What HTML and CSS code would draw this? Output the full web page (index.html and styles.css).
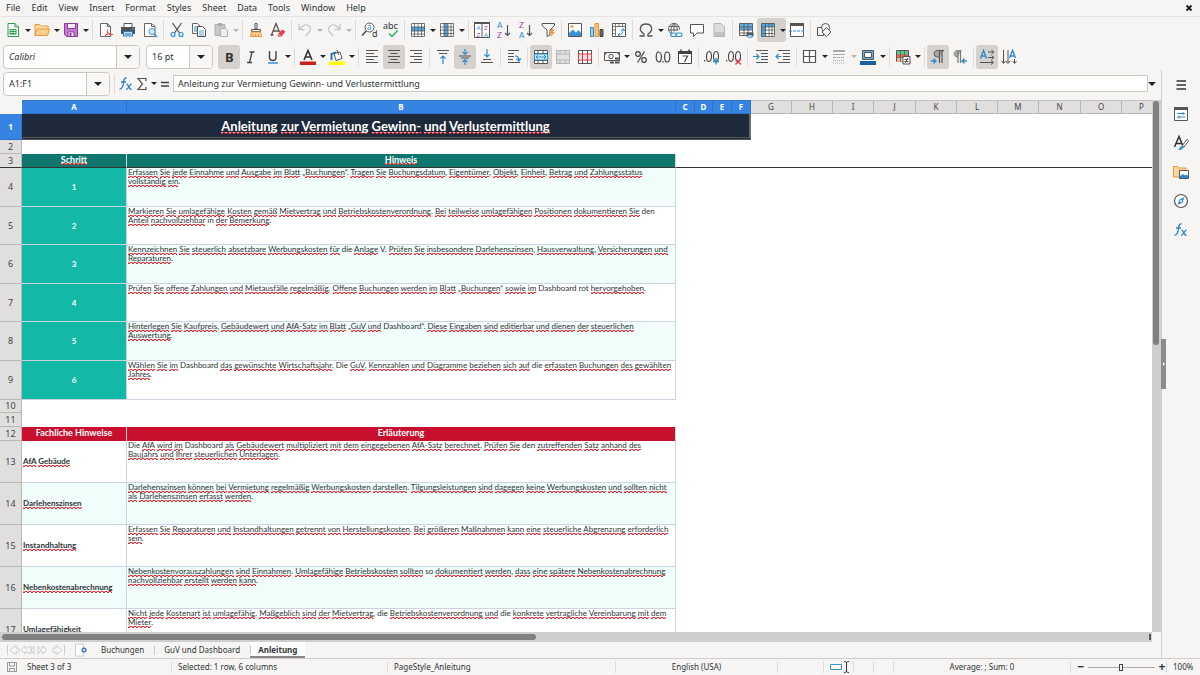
FILE: index.html
```html
<!DOCTYPE html>
<html lang="de">
<head>
<meta charset="utf-8">
<title>Anleitung – Tabelle</title>
<link rel="stylesheet" href="styles.css">
</head>
<body>
<header class="menubar">
  <nav class="menus">
    <button>File</button><button>Edit</button><button>View</button><button>Insert</button><button>Format</button><button>Styles</button><button>Sheet</button><button>Data</button><button>Tools</button><button>Window</button><button>Help</button>
  </nav>
  <button class="close" aria-label="Close"><svg class="i8" viewBox="0 0 8 8"><path d="M1.500 1.500L6.500 6.500M6.500 1.500L1.500 6.500" stroke="#222" stroke-width="2"/></svg></button>
</header>

<div class="toolbar" role="toolbar" aria-label="Standard">
  <button class="tb" aria-label="New"><svg viewBox="0 0 16 16"><path d="M3 1.500h7l3.500 3.500v9.500H3z" fill="#fff" stroke="#2e9e4f"/><path d="M10 1.500V5h3.500" fill="#bfe5c8" stroke="#2e9e4f"/><path d="M4.500 7h7v5.500h-7z" fill="#2e9e4f"/><path d="M5.500 8.500h2m1 0h2M5.500 10.500h2m1 0h2" stroke="#fff"/></svg></button><button class="arr" aria-label="More"></button>
  <button class="tb" aria-label="Open"><svg viewBox="0 0 16 16"><path d="M1 13V2.500h4.500l1 1.500H14v3" fill="#fce0a8" stroke="#e8963a"/><path d="M1 13.500L3 7h12.500l-2 6.500z" fill="#fbd18d" stroke="#e8963a"/></svg></button><button class="arr" aria-label="More"></button>
  <button class="tb" aria-label="Save"><svg viewBox="0 0 16 16"><path d="M1.500 1.500h13v13h-11l-2-2z" fill="#c679cf" stroke="#8e3a9d"/><path d="M4.500 1.500h8v5h-8z" fill="#f6eaf7" stroke="#8e3a9d"/><path d="M5 10h6v4.500H5z" fill="#fff" stroke="#8e3a9d"/><path d="M6.500 11h2v3h-2z" fill="#8e3a9d"/></svg></button><button class="arr" aria-label="More"></button>
  <span class="sep"></span>
  <button class="tb" aria-label="Export as PDF"><svg viewBox="0 0 16 16"><path d="M2.500 1.500h7l3 3v10h-10z" fill="#fff" stroke="#666"/><path d="M9.500 1.500v3h3" fill="none" stroke="#666"/><path d="M6.500 14.500c2-1 3.500-4 3.200-7M9.500 10c1.500 2.500 3.500 3 5.500 2.500M7 13.500c2-1.500 5-2 7.500-1" fill="none" stroke="#df3b45"/></svg></button>
  <button class="tb" aria-label="Print"><svg viewBox="0 0 16 16"><path d="M4 5V1.500h8V5" fill="#fff" stroke="#555"/><path d="M1 5h14v7H1z" fill="#4d5359"/><path d="M3.500 9.500h9v4.500h-9z" fill="#bcdcf2" stroke="#2878b8"/><path d="M5 12h6" stroke="#2878b8"/><circle cx="13" cy="7" r=".8" fill="#6bb6ec"/></svg></button>
  <button class="tb" aria-label="Print Preview"><svg viewBox="0 0 16 16"><path d="M2.500 1.500h7l3.500 3v10H2.500z" fill="#fff" stroke="#666"/><path d="M9.500 1.500v3h3.500" fill="none" stroke="#666"/><circle cx="10" cy="9.500" r="3" fill="#d8edfa" stroke="#3a94d3"/><path d="M12.200 12l2.800 3" stroke="#3a94d3" stroke-width="1.500"/></svg></button>
  <span class="sep"></span>
  <button class="tb" aria-label="Cut"><svg viewBox="0 0 16 16" fill="none"><path d="M3.500 1l7 10M12.500 1l-7 10" stroke="#555" stroke-width="1.300"/><circle cx="4" cy="12.500" r="2" stroke="#2d8ccf" stroke-width="1.200"/><circle cx="12" cy="12.500" r="2" stroke="#2d8ccf" stroke-width="1.200"/></svg></button>
  <button class="tb" aria-label="Copy"><svg viewBox="0 0 16 16"><path d="M1.500 1.500h5l3 3v7h-8z" fill="#fff" stroke="#666"/><path d="M3 5h4M3 7h4M3 9h4" stroke="#2d8ccf"/><path d="M6.500 4.500h5l3 3v7h-8z" fill="#fff" stroke="#555"/><path d="M8 9h5M8 11h5M8 13h5" stroke="#2d8ccf" stroke-width=".8"/></svg></button>
  <button class="tb" aria-label="Paste"><svg viewBox="0 0 16 16"><path d="M2 2.500h10v11H2z" fill="#c9c8c6" stroke="#b0afad"/><path d="M5 1h4v3H5z" fill="#aaa9a7"/><path d="M7.500 6.500h5l2 2v6h-7z" fill="#eee" stroke="#b0afad"/></svg></button><button class="arr dim" aria-label="More"></button>
  <span class="sep"></span>
  <button class="tb" aria-label="Clone Formatting"><svg viewBox="0 0 16 16"><path d="M7 1.500h2V7H7z" fill="#fff" stroke="#555"/><path d="M3.500 7.500h9v2h-9z" fill="#eee" stroke="#555"/><path d="M3.500 10h9l1 4.500h-11z" fill="#fbd7a3" stroke="#e8963a"/><path d="M5 12v2m2.500-2v2m3-2v2" stroke="#e8963a"/></svg></button>
  <button class="tb" aria-label="Clear Formatting"><svg viewBox="0 0 16 16"><path d="M1.500 13L6 1.500 9.500 10M3 9h6M.500 13h3" fill="none" stroke="#555" stroke-width="1.300"/><path d="M7.500 12.500l4.500-5 3.500 2-4.500 5.500-3-.5z" fill="#e4434b"/><path d="M8 12l3 2.500" stroke="#fbc7ca"/></svg></button>
  <span class="sep"></span>
  <button class="tb" aria-label="Undo"><svg viewBox="0 0 16 16" fill="none" stroke="#c6c5c3" stroke-width="1.300"><path d="M2 2v5.500h5.500M2 7.500C5 3 10 1.500 12.500 4.500S13 10 8.500 14"/></svg></button><button class="arr dim" aria-label="More"></button>
  <button class="tb" aria-label="Redo"><svg viewBox="0 0 16 16" fill="none" stroke="#c6c5c3" stroke-width="1.300"><path d="M14 2v5.500H8.500M14 7.500C11 3 6 1.500 3.500 4.500S3 10 7.500 14"/></svg></button><button class="arr dim" aria-label="More"></button>
  <span class="sep"></span>
  <button class="tb" aria-label="Find and Replace"><svg viewBox="0 0 16 16"><circle cx="8.500" cy="5.500" r="4.500" fill="#fff" stroke="#555"/><path d="M5.200 9L1 13.500" stroke="#555" stroke-width="1.800"/><text x="6" y="8" font-size="8" fill="#2d8ccf">a</text><text x="11" y="15" font-size="9" fill="#333">d</text></svg></button>
  <button class="tb" aria-label="Spelling"><svg viewBox="0 0 16 16"><text x="0" y="7" font-size="9" fill="#333">abc</text><path d="M6 11.500l3 3L14.500 8.500" fill="none" stroke="#2fae60" stroke-width="1.500"/></svg></button>
  <span class="sep"></span>
  <button class="tb" aria-label="Row"><svg viewBox="0 0 16 16"><path d="M1 1h14v14H1z" fill="#fff"/><path d="M1 5h14v4H1z" fill="#4fa9e3"/><path d="M1.500 1.500h13v13h-13zM1 5h14M1 9h14M1 12h14M4.500 1v14M8 1v14M11.500 1v14" fill="none" stroke="#555" stroke-width=".8"/></svg></button><button class="arr" aria-label="More"></button>
  <button class="tb" aria-label="Column"><svg viewBox="0 0 16 16"><path d="M1 1h14v14H1z" fill="#fff"/><path d="M5 1h4v14H5z" fill="#4fa9e3"/><path d="M1.500 1.500h13v13h-13zM1 5h14M1 8h14M1 11.500h14M5 1v14M9 1v14M12 1v14" fill="none" stroke="#555" stroke-width=".8"/></svg></button><button class="arr" aria-label="More"></button>
  <span class="sep"></span>
  <button class="tb" aria-label="Sort"><svg viewBox="0 0 16 16"><path d="M.500 .500h15v15H.500zM8 .500v15" fill="#fff" stroke="#555"/><path d="M0 0h16v2H0z" fill="#555"/><g class="letters" font-size="6"><text x="2.500" y="7.500" fill="#2d8ccf">A</text><text x="2.500" y="14.500" fill="#a23bb5">Z</text><text x="10" y="7.500" fill="#a23bb5">Z</text><text x="10" y="14.500" fill="#2d8ccf">A</text></g></svg></button>
  <button class="tb" aria-label="Sort Ascending"><svg viewBox="0 0 16 16"><g class="letters" font-size="8"><text x="1" y="6" fill="#2d8ccf">A</text><text x="1" y="15.500" fill="#a23bb5">Z</text></g><path d="M11.500 3v10.500M9 11l2.500 2.500L14 11" fill="none" stroke="#555" stroke-width="1.200"/></svg></button>
  <button class="tb" aria-label="Sort Descending"><svg viewBox="0 0 16 16"><g class="letters" font-size="8"><text x="1" y="6" fill="#a23bb5">Z</text><text x="1" y="15.500" fill="#2d8ccf">A</text></g><path d="M11.500 3v10.500M9 11l2.500 2.500L14 11" fill="none" stroke="#555" stroke-width="1.200"/></svg></button>
  <button class="tb" aria-label="AutoFilter"><svg viewBox="0 0 16 16"><path d="M2 1.500h12.500v2L10 8v5l-3 1.500V8L2 3.500z" fill="#fff" stroke="#555"/><path d="M11 7h3.500l-1.500 3h2l-4.500 5.500 1-4h-2z" fill="#f29d3b"/></svg></button>
  <span class="sep"></span>
  <button class="tb" aria-label="Image"><svg viewBox="0 0 16 16"><path d="M1.500 1.500h13v13h-13z" fill="#fff" stroke="#555"/><path d="M2 14v-3l4-3.500 3 3L11.500 8l2.500 3v3z" fill="#3a94d3"/><circle cx="5" cy="4.500" r="1.500" fill="#f2a33b"/></svg></button>
  <button class="tb" aria-label="Chart"><svg viewBox="0 0 16 16"><path d="M1.500 5.500h3v9h-3z" fill="#9dd0f3" stroke="#2d8ccf"/><path d="M6 1.500h3.500v13H6z" fill="#fbc47d" stroke="#e8963a"/><path d="M11 7.500h3v7h-3z" fill="#666" stroke="#444"/></svg></button>
  <button class="tb" aria-label="Pivot Table"><svg viewBox="0 0 16 16"><path d="M1.500 1.500h13v13h-13z" fill="#fff" stroke="#555"/><path d="M4.500 1.500v13M1.500 4.500h13M8 1.500v3M11.500 1.500v3M1.500 8h3M1.500 11.500h3" stroke="#777"/><path d="M7 13c4 0 5-2 5-6m-2 2l2-2.500L14 9M9 11l-2 2 2 1.500" fill="none" stroke="#2d8ccf"/></svg></button>
  <span class="sep"></span>
  <button class="tb" aria-label="Special Character"><svg viewBox="0 0 16 16"><path d="M1.500 14h4.500v-2C0 8.500 2 2 8 2s8 6.500 2 10v2h4.500" fill="none" stroke="#555" stroke-width="1.300"/></svg></button><button class="arr" aria-label="More"></button>
  <button class="tb" aria-label="Hyperlink"><svg viewBox="0 0 16 16" fill="none"><path d="M12.500 7.500A5.500 5.500 0 1 0 5 12M7 1.500v8M2 4.500h10M1.500 8h10M7 1.500C3.500 4 3.500 9 5 12M7 1.500c3 2 3.500 5 3 7" stroke="#555" stroke-width=".9"/><rect x="3.500" y="11" width="6" height="3.500" rx="1.700" stroke="#2d8ccf" stroke-width="1.100"/><rect x="9" y="11" width="6" height="3.500" rx="1.700" stroke="#2d8ccf" stroke-width="1.100"/></svg></button>
  <button class="tb" aria-label="Comment"><svg viewBox="0 0 16 16"><path d="M1.500 2.500h13v8.500H8l-3.500 3.500V11h-3z" fill="#fff" stroke="#555"/></svg></button>
  <button class="tb" aria-label="Headers and Footers"><svg viewBox="0 0 16 16"><path d="M3 1.500h7l3.500 3.500v9.500H3z" fill="#ddd" stroke="#b5b4b2"/><path d="M4 10h9v4H4z" fill="#c2c1bf"/></svg></button>
  <span class="sep"></span>
  <button class="tb" aria-label="Print Area"><svg viewBox="0 0 16 16"><path d="M1.500 1.500h13v12h-13z" fill="#fff"/><path d="M2 2h12v6H2z" fill="#62b2e8"/><path d="M1.500 1.500h13v12h-13zM1 5h14M1 8h14M1 11h14M6 1v13M10 1v13" fill="none" stroke="#555" stroke-width=".9"/><path d="M8.500 10.500h7v4h-7z" fill="#555"/><path d="M10 13h4v2.500h-4z" fill="#bcdcf2" stroke="#2d8ccf" stroke-width=".6"/></svg></button>
  <span class="group on"><button class="tb" aria-label="Freeze Rows and Columns"><svg viewBox="0 0 16 16"><path d="M1.500 1.500h13v13h-13z" fill="#fff"/><path d="M1 1h14v4H1zM1 1h5v14H1z" fill="#4fa9e3"/><path d="M1.500 1.500h13v13h-13zM1 5h14M1 8h14M1 11.500h14M5.500 1v14M9 1v14M12 1v14" fill="none" stroke="#555" stroke-width=".8"/></svg></button><button class="arr" aria-label="More"></button></span>
  <button class="tb" aria-label="Split Window"><svg viewBox="0 0 16 16"><path d="M1.500 1.500h13v13h-13z" fill="#fff" stroke="#555"/><path d="M1 1h14v3H1z" fill="#555"/><path d="M0 9h16" stroke="#2d8ccf" stroke-dasharray="3 1"/></svg></button>
  <span class="sep"></span>
  <button class="tb" aria-label="Show Draw Functions"><svg viewBox="0 0 16 16" fill="#f6f5f4" stroke="#555"><path d="M1.500 5.500h6v8h-6z"/><circle cx="9.500" cy="5.500" r="4"/><path d="M10.500 5.500L15 10l-4.500 4.500L6 10z"/></svg></button>
</div>

<div class="toolbar" role="toolbar" aria-label="Formatting">
  <span class="combo font"><input type="text" value="Calibri" aria-label="Font Name"><button aria-label="Font list"></button></span>
  <span class="combo size"><input type="text" value="16 pt" aria-label="Font Size"><button aria-label="Size list"></button></span>
  <button class="tb on" aria-label="Bold"><svg viewBox="0 0 16 16"><text x="4" y="13" font-size="13" font-weight="bold" fill="#333">B</text></svg></button>
  <button class="tb" aria-label="Italic"><svg viewBox="0 0 16 16"><path d="M6.500 3h5M4 13.500h5M9 3L6.500 13.500" stroke="#444" stroke-width="1.300"/></svg></button>
  <button class="tb" aria-label="Underline"><svg viewBox="0 0 16 16"><path d="M4.500 2v6.500c0 4 6.500 4 6.500 0V2" fill="none" stroke="#444" stroke-width="1.400"/><path d="M3 14h10" stroke="#3a8fdc" stroke-width="1.500"/></svg></button><button class="arr" aria-label="More"></button>
  <span class="sep"></span>
  <button class="tb" aria-label="Font Color"><svg viewBox="0 0 16 16"><path d="M4 11L8 1.500 12 11M5.500 8h5" fill="none" stroke="#333" stroke-width="1.600"/><path d="M0 12.500h16v3.500H0z" fill="#c9211e"/></svg></button><button class="arr" aria-label="More"></button>
  <button class="tb" aria-label="Background Color"><svg viewBox="0 0 16 16"><path d="M5 4.500l6-1.500 2 6.500-6 2z" fill="#fff" stroke="#555"/><path d="M8 1l1.500 5" stroke="#555"/><path d="M2.500 11V5L7 3.500" fill="none" stroke="#2878b8" stroke-width="2"/><path d="M0 12.500h16v3.500H0z" fill="#ffff00"/></svg></button><button class="arr" aria-label="More"></button>
  <span class="sep"></span>
  <button class="tb" aria-label="Align Left"><svg viewBox="0 0 16 16" stroke="#555"><path d="M2 1.500h12M2 4.500h8M2 7.500h12M2 10.500h8M2 13.500h12"/></svg></button>
  <button class="tb on" aria-label="Center"><svg viewBox="0 0 16 16" stroke="#555"><path d="M2 1.500h12M4.500 4.500h7M2 7.500h12M4.500 10.500h7M2 13.500h12"/></svg></button>
  <button class="tb" aria-label="Align Right"><svg viewBox="0 0 16 16" stroke="#555"><path d="M2 1.500h12M6 4.500h8M2 7.500h12M6 10.500h8M2 13.500h12"/></svg></button>
  <span class="sep"></span>
  <button class="tb" aria-label="Align Top"><svg viewBox="0 0 16 16" fill="none"><path d="M2 1.500h12M4 4.500h8" stroke="#555"/><path d="M8 15V7M5.500 9.500L8 7l2.500 2.500" stroke="#2d8ccf" stroke-width="1.200"/></svg></button>
  <button class="tb on" aria-label="Center Vertically"><svg viewBox="0 0 16 16" fill="none"><path d="M2 7h12M4 9h8" stroke="#555"/><path d="M8 0v5M5.500 3L8 5.500 10.500 3M8 16v-5M5.500 13L8 10.500l2.500 2.500" stroke="#2d8ccf" stroke-width="1.200"/></svg></button>
  <button class="tb" aria-label="Align Bottom"><svg viewBox="0 0 16 16" fill="none"><path d="M2 13.500h12M4 10.500h8" stroke="#555"/><path d="M8 0v8M5.500 5.500L8 8l2.500-2.500" stroke="#2d8ccf" stroke-width="1.200"/></svg></button>
  <span class="sep"></span>
  <button class="tb" aria-label="Wrap Text"><svg viewBox="0 0 16 16" fill="none"><path d="M2 1.500h11M2 4.500h6M2 7.500h6M2 10.500h5M2 13.500h12" stroke="#555"/><path d="M9 7c3 0 4 1 4 4M10.500 9.500L13 12l2-2.500" stroke="#2d8ccf" stroke-width="1.200"/></svg></button>
  <span class="sep"></span>
  <button class="tb on" aria-label="Merge and Center Cells"><svg viewBox="0 0 16 16"><path d="M1.500 1.500h13v13h-13z" fill="#fff" stroke="#555"/><path d="M1 4.500h14M1 11.500h14M5 1v3.500M10 1v3.500M5 12v3M10 12v3" stroke="#555"/><path d="M1.500 5h13v6h-13z" fill="#d5ecfb" stroke="#2d8ccf"/><path d="M3 8h10M5 6L3 8l2 2m6-4l2 2-2 2" fill="none" stroke="#2d8ccf"/></svg></button>
  <button class="tb" aria-label="Merge Cells"><svg viewBox="0 0 16 16"><path d="M1.500 1.500h13v13h-13zM1 5h14M1 11h14M5 1v4M10 1v4M5 11v4M10 11v4" fill="#e3e2e0" stroke="#b5b4b2"/></svg></button>
  <button class="tb" aria-label="Unmerge Cells"><svg viewBox="0 0 16 16"><path d="M1.500 1.500h13v13h-13zM5.500 1v4M10.500 1v4M5.500 11v4M10.500 11v4" fill="#fff" stroke="#555"/><path d="M1.500 5h13v6h-13zM5.500 5v6M10.500 5v6" fill="#fde3e3" stroke="#df3b45"/></svg></button>
  <span class="sep"></span>
  <button class="tb" aria-label="Format as Currency"><svg viewBox="0 0 16 16"><path d="M.5 3.500h15v8H.5z" fill="#f6f5f4" stroke="#555"/><circle cx="7" cy="7.500" r="2.200" fill="none" stroke="#555"/><path d="M1 4h2L1 6zM15 4h-2l2 2z" fill="#555"/><path d="M6 11h4v3.500H6zM11 8.500h4.500v6H11z" fill="#555"/><path d="M11 10.500h4M11 12.500h4M6 12.500h4" stroke="#ccc" stroke-width=".6"/></svg></button><button class="arr" aria-label="More"></button>
  <button class="tb" aria-label="Format as Percent"><svg viewBox="0 0 16 16"><circle cx="5" cy="5" r="2.300" fill="none" stroke="#444" stroke-width="1.200"/><circle cx="11" cy="11" r="2.300" fill="none" stroke="#444" stroke-width="1.200"/><path d="M11.500 2.500L4.500 13.500" stroke="#444" stroke-width="1.200"/></svg></button>
  <button class="tb" aria-label="Format as Number"><svg viewBox="0 0 16 16" fill="none" stroke="#444" stroke-width="1.200"><ellipse cx="3.800" cy="8" rx="2.600" ry="5"/><path d="M8 12v1.500"/><ellipse cx="12.200" cy="8" rx="2.600" ry="5"/></svg></button>
  <button class="tb" aria-label="Format as Date"><svg viewBox="0 0 16 16"><path d="M1.500 2.500h13v12h-13z" fill="#fff" stroke="#444"/><path d="M1 2h14v3H1z" fill="#444"/><path d="M4 .5v3M12 .5v3" stroke="#444" stroke-width="1.500"/><path d="M5.500 7h5L7.500 13" fill="none" stroke="#444" stroke-width="1.200"/></svg></button>
  <span class="sep"></span>
  <button class="tb" aria-label="Add Decimal Place"><svg viewBox="0 0 16 16" fill="none" stroke="#444" stroke-width="1.100"><path d="M.7 11v1.500"/><ellipse cx="5" cy="7.500" rx="2.500" ry="5"/><ellipse cx="12" cy="7.500" rx="2.500" ry="5"/><path d="M12 9v6.500M9 12.500h6" stroke="#2d8ccf" stroke-width="1.400"/></svg></button>
  <button class="tb" aria-label="Delete Decimal Place"><svg viewBox="0 0 16 16" fill="none" stroke="#444" stroke-width="1.100"><path d="M.7 11v1.500"/><ellipse cx="5" cy="7.500" rx="2.500" ry="5"/><ellipse cx="12" cy="7.500" rx="2.500" ry="5"/><path d="M9.500 10l5.500 5.500M15 10l-5.500 5.500" stroke="#df3b45" stroke-width="1.300"/></svg></button>
  <span class="sep"></span>
  <button class="tb" aria-label="Increase Indent"><svg viewBox="0 0 16 16" fill="none"><path d="M3 1.500h12M8 4.500h7M8 7.500h7M8 10.500h7M3 13.500h12" stroke="#555"/><path d="M0 7.500h5.500M3.500 5L6 7.500 3.500 10" stroke="#2d8ccf" stroke-width="1.200"/></svg></button>
  <button class="tb" aria-label="Decrease Indent"><svg viewBox="0 0 16 16" fill="none"><path d="M3 1.500h12M8 4.500h7M8 7.500h7M8 10.500h7M3 13.500h12" stroke="#555"/><path d="M6.500 7.500H1M3.500 5L1 7.500 3.500 10" stroke="#2d8ccf" stroke-width="1.200"/></svg></button>
  <span class="sep"></span>
  <button class="tb" aria-label="Borders"><svg viewBox="0 0 16 16"><path d="M1.500 1.500h12v12h-12zM7.500 1.500v12M1.500 7.500h12" fill="#fff" stroke="#555" stroke-width="1.200"/></svg></button><button class="arr" aria-label="More"></button>
  <button class="tb" aria-label="Border Style"><svg viewBox="0 0 16 16" stroke="#aaa"><path d="M2 2h12" stroke-width="2"/><path d="M2 5.500h12"/><path d="M2 8.500h12" stroke-dasharray="3 1"/><path d="M2 11.500h12M2 14h12" stroke-dasharray="1 1"/></svg></button><button class="arr dim" aria-label="More"></button>
  <button class="tb" aria-label="Border Color"><svg viewBox="0 0 16 16"><path d="M2.500 1.500h11v9h-11z" fill="#5fb0e8" stroke="#555"/><path d="M4.500 3.500h7v5h-7z" fill="#fff" stroke="#555"/><path d="M0 12h16v4H0z" fill="#1c5f9e"/></svg></button><button class="arr" aria-label="More"></button>
  <span class="sep"></span>
  <button class="tb" aria-label="Conditional Formatting"><svg viewBox="0 0 16 16"><path d="M1.500 1.500h12v11h-12z" fill="#fff" stroke="#555"/><path d="M2 2h11v3H2z" fill="#5fc583"/><path d="M2 6h11v3H2z" fill="#e8684a"/><path d="M2 10h5v3H2z" fill="#f4b183"/><path d="M1 5.500h13M1 9h13M5.500 1v12M9.500 1v12" stroke="#555" stroke-width=".7"/><path d="M8 7.500h7v7.500H8z" fill="#fff" stroke="#555"/><path d="M9.500 10.500h4M9.500 12.500h4M13 9l-3 5" stroke="#444" stroke-width=".9"/></svg></button><button class="arr" aria-label="More"></button>
  <span class="sep"></span>
  <button class="tb on" aria-label="Left-To-Right"><svg viewBox="0 0 16 16"><path d="M14 1.500H7.500c-4.500 0-4.500 6.500 0 6.500H9" fill="#aaa" stroke="#555"/><path d="M9.500 1.500V14M12 1.500V14" stroke="#555" stroke-width="1.200"/><path d="M1 12h5M3.500 9.500L6 12l-2.500 2.500" fill="none" stroke="#2d8ccf" stroke-width="1.300"/></svg></button>
  <button class="tb" aria-label="Right-To-Left"><svg viewBox="0 0 16 16"><path d="M9.500 1.500h-4c-4.500 0-4.500 6.500 0 6.500" fill="#aaa" stroke="#888"/><path d="M6 1.500V14M8.500 1.500V14" stroke="#777" stroke-width="1.200"/><path d="M15 12h-5M12.500 9.500L10 12l2.500 2.500" fill="none" stroke="#2d8ccf" stroke-width="1.300"/></svg></button>
  <span class="sep"></span>
  <button class="tb on" aria-label="Text Left to Right"><svg viewBox="0 0 16 16" fill="none"><path d="M1.500 9.500L4.500 1.500l3 8M2.500 7h4" stroke="#2d8ccf" stroke-width="1.400"/><path d="M9 3h5.500M12.500 1L15 3l-2.500 2M9 8.500h5.500M12.500 6.500L15 8.500l-2.500 2M1 13.500h13M12 11.500l2.500 2L12 15.500" stroke="#555"/></svg></button>
  <button class="tb" aria-label="Text Top to Bottom"><svg viewBox="0 0 16 16" fill="none"><path d="M8.500 9L11.500 1.500l3 7.500M9.500 7h4" stroke="#2d8ccf" stroke-width="1.400"/><path d="M2.500 1v13M.5 12l2 2.500 2-2.500M7 1v13M5 12l2 2.500L9 12M13.500 10v4M11.500 12l2 2.500 2-2.500" stroke="#555"/></svg></button>
</div>

<div class="work">
  <main class="doc">
    <div class="formulabar">
      <span class="combo name"><input type="text" value="A1:F1" aria-label="Name Box"><button aria-label="Names"></button></span>
      <span class="sep tall"></span>
      <button class="fb" aria-label="Function Wizard"><svg viewBox="0 0 16 16" fill="none" stroke="#2d7fc6" stroke-width="1.300"><path d="M8.500 2C6 1.500 6 4 5.500 7S4 13.500 1.500 13M3 6h5M8.500 8c2 0 2 5.500 5 5.500M13.500 8c-2 0-3 5.500-5.500 5.500"/></svg></button>
      <button class="fb sum" aria-label="Select Function"><svg viewBox="0 0 16 16" fill="none" stroke="#555" stroke-width="1.200"><path d="M12 5V2.500H4L8.500 8 4 13.500h8V11"/></svg></button><button class="arr" aria-label="More"></button>
      <button class="fb" aria-label="Formula"><svg viewBox="0 0 16 16"><path d="M4 6.500h8M4 10h8" stroke="#444" stroke-width="1.500"/></svg></button>
      <input class="formula" type="text" value="Anleitung zur Vermietung Gewinn- und Verlustermittlung" aria-label="Input line">
      <button class="expand" aria-label="Expand Formula Bar"></button>
    </div>

    <div class="view">
      <div class="sheet">
        <table class="grid">
          <colgroup><col class="c-rh"><col class="c-a"><col class="c-b"><col class="c-n"><col class="c-m"><col class="c-n"><col class="c-n"><col class="c-w"><col class="c-w"><col class="c-w"><col class="c-x"><col class="c-w"><col class="c-w"><col class="c-w"><col class="c-x"><col class="c-w"></colgroup>
          <thead><tr class="heads"><th class="corner"></th><th class="sel">A</th><th class="sel">B</th><th class="sel">C</th><th class="sel">D</th><th class="sel">E</th><th class="sel">F</th><th>G</th><th>H</th><th>I</th><th>J</th><th>K</th><th>L</th><th>M</th><th>N</th><th>O</th></tr></thead>
          <tbody>
            <tr class="h26"><th class="sel">1</th><td class="title spell" colspan="6">Anleitung zur Vermietung Gewinn- und Verlustermittlung</td></tr>
            <tr class="h14"><th>2</th></tr>
            <tr class="h14 frozen"><th>3</th><td class="head teal spell">Schritt</td><td class="head teal spell">Hinweis</td><td colspan="13"></td></tr>
            <tr class="h39 mint"><th>4</th><td class="step">1</td><td class="text spell">Erfassen Sie jede Einnahme und Ausgabe im Blatt „Buchungen“. Tragen Sie Buchungsdatum, Eigentümer, Objekt, Einheit, Betrag und Zahlungsstatus<br>vollständig ein.</td></tr>
            <tr class="h38"><th>5</th><td class="step">2</td><td class="text spell">Markieren Sie umlagefähige Kosten gemäß Mietvertrag und Betriebskostenverordnung. Bei teilweise umlagefähigen Positionen dokumentieren Sie den<br>Anteil nachvollziehbar in der Bemerkung.</td></tr>
            <tr class="h39 mint"><th>6</th><td class="step">3</td><td class="text spell">Kennzeichnen Sie steuerlich absetzbare Werbungskosten für die Anlage V. Prüfen Sie insbesondere Darlehenszinsen, Hausverwaltung, Versicherungen und<br>Reparaturen.</td></tr>
            <tr class="h38"><th>7</th><td class="step">4</td><td class="text spell">Prüfen Sie offene Zahlungen und Mietausfälle regelmäßig. Offene Buchungen werden im Blatt „Buchungen“ sowie im Dashboard rot hervorgehoben.</td></tr>
            <tr class="h39 mint"><th>8</th><td class="step">5</td><td class="text spell">Hinterlegen Sie Kaufpreis, Gebäudewert und AfA-Satz im Blatt „GuV und Dashboard“. Diese Eingaben sind editierbar und dienen der steuerlichen<br>Auswertung.</td></tr>
            <tr class="h39"><th>9</th><td class="step">6</td><td class="text spell">Wählen Sie im Dashboard das gewünschte Wirtschaftsjahr. Die GuV, Kennzahlen und Diagramme beziehen sich auf die erfassten Buchungen des gewählten<br>Jahres.</td></tr>
            <tr class="h13"><th>10</th></tr>
            <tr class="h14"><th>11</th></tr>
            <tr class="h14"><th>12</th><td class="head red">Fachliche Hinweise</td><td class="head red">Erläuterung</td></tr>
            <tr class="h42"><th>13</th><td class="topic spell">AfA Gebäude</td><td class="text spell">Die AfA wird im Dashboard als Gebäudewert multipliziert mit dem eingegebenen AfA-Satz berechnet. Prüfen Sie den zutreffenden Satz anhand des<br>Baujahrs und Ihrer steuerlichen Unterlagen.</td></tr>
            <tr class="h42 mint"><th>14</th><td class="topic spell">Darlehenszinsen</td><td class="text spell">Darlehenszinsen können bei Vermietung regelmäßig Werbungskosten darstellen. Tilgungsleistungen sind dagegen keine Werbungskosten und sollten nicht<br>als Darlehenszinsen erfasst werden.</td></tr>
            <tr class="h42"><th>15</th><td class="topic spell">Instandhaltung</td><td class="text spell">Erfassen Sie Reparaturen und Instandhaltungen getrennt von Herstellungskosten. Bei größeren Maßnahmen kann eine steuerliche Abgrenzung erforderlich<br>sein.</td></tr>
            <tr class="h42 mint"><th>16</th><td class="topic spell">Nebenkostenabrechnung</td><td class="text spell">Nebenkostenvorauszahlungen sind Einnahmen. Umlagefähige Betriebskosten sollten so dokumentiert werden, dass eine spätere Nebenkostenabrechnung<br>nachvollziehbar erstellt werden kann.</td></tr>
            <tr class="h42"><th>17</th><td class="topic spell">Umlagefähigkeit</td><td class="text spell">Nicht jede Kostenart ist umlagefähig. Maßgeblich sind der Mietvertrag, die Betriebskostenverordnung und die konkrete vertragliche Vereinbarung mit dem<br>Mieter.</td></tr>
          </tbody>
        </table>
        <div class="lastcol"><span>P</span></div>
      </div>
      <div class="vscroll"><span></span></div>
    </div>
    <div class="hscroll"><span class="thumb"></span><span class="mark"></span></div>

    <div class="tabs">
      <span class="navs">
        <svg viewBox="0 0 60 12" fill="none" stroke="#cfcecc"><path d="M1.500 1v10M10 1L4 6l6 5V8h3V4h-3zM19 2l-4 4 4 4V8h2l4 2V2l-4 2h-2zM28 2l-3 4 3 4zM32 2l3 4-3 4zM35 4h2V2l4 4-4 4V8h-2M47 4h3V1l6 5-6 5V8h-3zM58.500 1v10"/></svg>
      </span>
      <button class="add" aria-label="Add Sheet"><svg viewBox="0 0 14 14"><path d="M1.500 1h8v12h-8z" fill="#fff" stroke="#ccc"/><circle cx="10" cy="7" r="2.500" fill="#1f5faf"/><path d="M10 5.500v3M8.500 7h3" stroke="#fff"/></svg></button>
      <button class="tab">Buchungen</button><button class="tab">GuV und Dashboard</button><button class="tab active">Anleitung</button>
    </div>
  </main>

  <aside class="side">
    <button aria-label="Sidebar Settings"><svg viewBox="0 0 16 16"><path d="M3.500 4h9.500M3.500 8h9.500M3.500 12h9.500" stroke="#333" stroke-width="1.400"/></svg></button>
    <button aria-label="Properties"><svg viewBox="0 0 16 16"><path d="M1.500 1.500h13v13h-13z" fill="#fff" stroke="#555"/><path d="M1 1h14v3H1z" fill="#555"/><path d="M4 7.500h8M4 11h8M10 6v3M6 9.500v3" stroke="#2d8ccf"/></svg></button>
    <button aria-label="Styles"><svg viewBox="0 0 16 16"><path d="M1.500 12L6 1.500 9.500 10M3.500 8.500h5" fill="none" stroke="#333" stroke-width="1.500"/><path d="M9 11l4.500-6c1-1 2.500 0 1.500 1.500L11 12z" fill="#fff" stroke="#555"/><path d="M4.500 15c2 0 2-4.500 5-4 2.500 1.500 0 4.500-5 4z" fill="#3a94d3"/></svg></button>
    <button aria-label="Gallery"><svg viewBox="0 0 16 16"><path d="M.5 13V2.500h4l1 1.500H13v9z" fill="#fbd59a" stroke="#e8963a"/><path d="M6.500 6.500h9v8h-9z" fill="#fff" stroke="#555"/><path d="M7 14v-2l3-2 2 1.500 1.500-1L15 12v2z" fill="#2d8ccf"/></svg></button>
    <button aria-label="Navigator"><svg viewBox="0 0 16 16"><circle cx="8" cy="8" r="6.500" fill="#fff" stroke="#555" stroke-width="1.200"/><path d="M11.500 4L9.500 9.500 4.500 12l2-5.500z" fill="#2d8ccf"/><circle cx="8" cy="8" r="1" fill="#fff"/></svg></button>
    <button aria-label="Functions"><svg viewBox="0 0 16 16" fill="none" stroke="#2d7fc6" stroke-width="1.300"><path d="M8.500 2C6 1.500 6 4 5.500 7S4 13.500 1.500 13M3 6h5M8.500 8c2 0 2 5.500 5 5.500M13.500 8c-2 0-3 5.500-5.500 5.500"/></svg></button>
    <button class="handle" aria-label="Show sidebar deck"></button>
  </aside>
</div>

<footer class="status">
  <span class="s-sheet"><svg viewBox="0 0 12 12" fill="none" stroke="#999"><path d="M1.500 1.500h9v9h-9zM3.500 1.500v3.500h5V1.500M3.500 10.500V7.500h5v3"/></svg>Sheet 3 of 3</span>
  <span>Selected: 1 row, 6 columns</span>
  <span>PageStyle_Anleitung</span>
  <span class="mid">English (USA)</span>
  <span></span>
  <span class="s-mode"><svg viewBox="0 0 20 12" fill="none"><path d="M.500 3.500h11v5h-11z" fill="#fff" stroke="#3a94d3"/><path d="M16.500 1v10M14 .500c1.500 0 2.500.500 2.500 1 0-.500 1-1 2.500-1M14 11.500c1.500 0 2.500-.500 2.500-1 0 .500 1 1 2.500 1" stroke="#333"/></svg></span>
  <span></span><span></span>
  <span class="mid">Average: ; Sum: 0</span>
  <span class="s-zoom"><button aria-label="Zoom out">−</button><input type="range" min="0" max="100" value="49" aria-label="Zoom"><button aria-label="Zoom in">+</button></span>
  <span class="s-pct">100%</span>
</footer>
<script src="script.js"></script>
</body>
</html>
```
FILE: styles.css
```css
* { box-sizing: border-box; }
body {
  margin: 0;
  height: 100vh;
  display: flex;
  flex-direction: column;
  overflow: hidden;
  background: #f6f5f4;
  color: #2e3436;
  font-family: "Noto Sans", sans-serif;
  font-size: 9px;
  line-height: 12px;
}
button, input { font: inherit; color: inherit; margin: 0; padding: 0; border: 0; background: none; min-width: 0; }
button { display: flex; align-items: center; justify-content: center; }
svg { display: block; flex: none; overflow: visible; }
.letters { font-family: Lato, sans-serif; }

.menubar { flex: none; display: flex; justify-content: space-between; height: 16px; align-items: center; padding: 0 7px 0 6px; }
.menus { display: flex; gap: 11px; }
.i8 { width: 8px; height: 8px; }

.toolbar { flex: none; display: flex; align-items: center; height: 27px; padding-left: 2px; }
.menubar + .toolbar { border-top: 1px solid #e6e4e2; }
.tb { flex: none; width: 22px; height: 24px; border-radius: 3px; }
.tb svg, .fb svg, .side svg { width: 16px; height: 16px; }
.on { background: #d5d1cd; }
.group { display: flex; border-radius: 3px; }
.arr { flex: none; width: 7px; height: 24px; }
.arr::after, .combo button::after, .expand::after { content: ""; border: 3px solid transparent; border-top-color: #222; border-bottom: 0; }
.combo button::after, .expand::after { border-width: 4px 4px 0; }
.arr.dim::after { border-top-color: #b5b4b2; }
.sep { flex: none; width: 5px; height: 20px; background: linear-gradient(#dedcda, #dedcda) center / 1px 100% no-repeat; }
.arr + .sep { width: 6px; }

.combo { flex: none; display: flex; height: 24px; border: 1px solid #cdc7c2; border-radius: 4px; background: #fff; overflow: hidden; }
.combo input { flex: 1; padding-left: 5px; }
.combo button { width: 23px; background: #f8f7f6; border-left: 1px solid #cdc7c2; }
.font { width: 137px; margin: 0 6px 0 1px; font-style: italic; }
.size { width: 67px; margin-right: 5px; }

.work { flex: 1; min-height: 0; display: flex; }
.doc { flex: 1; min-width: 0; display: flex; flex-direction: column; border-right: 1px solid #cfccc9; }
.formulabar { flex: none; display: flex; align-items: center; height: 30px; padding: 0 5px 3px 3px; }
.name { width: 107px; }
.sep.tall { width: 8px; }
.fb { flex: none; width: 16px; height: 22px; }
.formula { flex: 1; height: 17px; padding-left: 4px; border: 1px solid #cdc7c2; background: #fff; }
.expand { width: 8px; height: 17px; }

.view { flex: 1; min-height: 0; display: flex; }
.sheet { flex: 1; min-width: 0; display: flex; align-items: flex-start; overflow: hidden; background: #fff; }
.grid { flex: none; width: 1121px; table-layout: fixed; border-collapse: separate; border-spacing: 0; }
.c-rh { width: 22px; } .c-a { width: 105px; } .c-b { width: 549px; }
.c-n { width: 19px; } .c-m { width: 18px; } .c-w { width: 41px; } .c-x { width: 42px; }
.grid th, .grid td { padding: 0; overflow: hidden; }
.grid th { font-weight: 400; background: #e0dfde; color: #444; border-right: 1px solid #b9b8b7; border-bottom: 1px solid #b9b8b7; line-height: 10px; vertical-align: middle; }
.heads th { height: 14px; font-size: 8px; border-top: 1px solid #c4c3c2; }
.grid .heads .corner { background: #f6f5f4; border-color: #f6f5f4; }
.grid th.sel { background: #3584e4; color: #fff; font-weight: 700; border-color: #2f74c8; }
.h13 { height: 13px; } .h14 { height: 14px; } .h26 { height: 26px; }
.h38 { height: 38px; } .h39 { height: 39px; } .h42 { height: 42px; }
.grid td { font-family: Lato, sans-serif; vertical-align: top; white-space: nowrap; }
.grid .title { background: #1e293b; color: #fff; font-size: 13px; line-height: 22px; font-weight: 700; text-align: center; vertical-align: middle; border-right: 2px solid #6a6a6a; border-bottom: 3px double #555; }
.frozen th, .frozen td { border-bottom: 1px solid #333 !important; }
.grid .head { color: #fff; font-weight: 700; font-size: 9px; line-height: 12px; text-align: center; border-right: 1px solid #cfd8d8; }
.teal { background: #0f766e; }
.red { background: #c8102e; }
.grid .step { background: #14b8a6; color: #fff; font-size: 8px; font-weight: 700; text-align: center; vertical-align: middle; border-right: 1px solid #cbd5e1; border-bottom: 1px solid #cbd5e1; }
.grid .text { font-size: 8px; line-height: 9px; padding-left: 1px; border-right: 1px solid #cbd5e1; border-bottom: 1px solid #cbd5e1; }
.grid .topic { font-size: 8px; line-height: 10px; font-weight: 700; padding: 0 0 2px 1px; vertical-align: middle; border-right: 1px solid #cbd5e1; border-bottom: 1px solid #cbd5e1; }
.mint .text, .mint .topic { background: #f0fdfa; }
.typo {
  padding-bottom: 1px;
  background:
    repeating-linear-gradient(90deg, #dc3238 0 2px, transparent 2px 4px) 0 100% / 100% 1px no-repeat,
    repeating-linear-gradient(90deg, #f0a0a4 0 2px, #dc3238 2px 4px) 0 calc(100% - 1px) / 100% 1px no-repeat;
}
.title .typo, .head .typo { padding-bottom: 0; }
.lastcol { flex: 1; height: 68px; border-bottom: 1px solid #333; }
.lastcol span { display: block; height: 14px; padding-left: 9px; text-align: center; font-size: 8px; line-height: 12px; background: #e0dfde; color: #444; border-top: 1px solid #c4c3c2; border-bottom: 1px solid #b9b8b7; }

.vscroll { flex: none; width: 9px; background: #cecece; padding: 1px; }
.vscroll span { display: block; width: 6px; height: 46%; border-radius: 3px; background: #808080; }
.hscroll { flex: none; display: flex; justify-content: space-between; align-items: center; height: 10px; margin-right: 9px; padding: 0 1px 0 2px; background: #cecece; }
.thumb { width: 46.5%; height: 6px; border-radius: 3px; background: #808080; }
.mark { width: 2px; height: 6px; background: #555; }

.tabs { flex: none; display: flex; align-items: center; height: 16px; padding-left: 6px; font-size: 8px; }
.navs svg { width: 60px; height: 12px; }
.add { width: 25px; height: 16px; padding-left: 5px; }
.add svg { width: 14px; height: 14px; }
.tab { height: 16px; padding: 0 10px; }
.tab + .tab { background: linear-gradient(#cdc7c2, #cdc7c2) 0 50% / 1px 9px no-repeat; }
.tab.active { background-color: #fff; font-weight: 700; padding: 2px 8px 0; border-bottom: 2px solid #888; }

.side { position: relative; flex: none; width: 38px; display: flex; flex-direction: column; align-items: center; gap: 5px; padding: 3px 0 0; }
.side button { width: 24px; height: 24px; }
.side .handle { position: absolute; left: -1px; top: 269px; width: 5px; height: 50px; background: #8c8c8c; }
.handle::after { content: ""; border: 2px solid transparent; border-left-color: #fff; border-right: 0; }

.status {
  flex: none;
  display: grid;
  grid-template-columns: 172fr 216fr 228fr 162fr 46fr 30fr 20fr 20fr 177fr 96fr 33fr;
  align-items: center;
  height: 17px;
  border-top: 1px solid #cfccc9;
  font-size: 8px;
}
.status > span { min-width: 0; display: flex; align-items: center; height: 12px; padding-left: 6px; border-right: 1px solid #dedcda; white-space: nowrap; }
.status > .mid { justify-content: center; padding: 0; }
.s-sheet { gap: 9px; }
.s-sheet svg { width: 12px; height: 12px; }
.s-mode svg { width: 20px; height: 12px; }
.s-zoom { gap: 3px; }
.status > .s-pct { border: 0; }
.s-zoom button { width: 8px; font-size: 12px; font-weight: 700; }
.s-zoom input { flex: 1; width: 0; height: 10px; appearance: none; background: linear-gradient(#aaa, #aaa) center / 100% 1px no-repeat; }
.s-zoom input::-webkit-slider-thumb { appearance: none; width: 4px; height: 7px; border: 1px solid #444; background: #f6f5f4; }
```
FILE: script.js
```js
// Marks every word that the English dictionary does not know.
const known = new Set(["den", "in", "die", "Die", "Dashboard", "rot", "V", "so"]);

document.querySelectorAll(".spell").forEach((cell) => {
  [...cell.childNodes].forEach((node) => {
    if (node.nodeType !== Node.TEXT_NODE) return;
    const out = document.createDocumentFragment();
    node.textContent.split(/([\p{L}-]+)/u).forEach((part) => {
      if (/\p{L}/u.test(part) && !known.has(part)) {
        const word = document.createElement("span");
        word.className = "typo";
        word.textContent = part;
        out.append(word);
      } else {
        out.append(part);
      }
    });
    node.replaceWith(out);
  });
});
```
